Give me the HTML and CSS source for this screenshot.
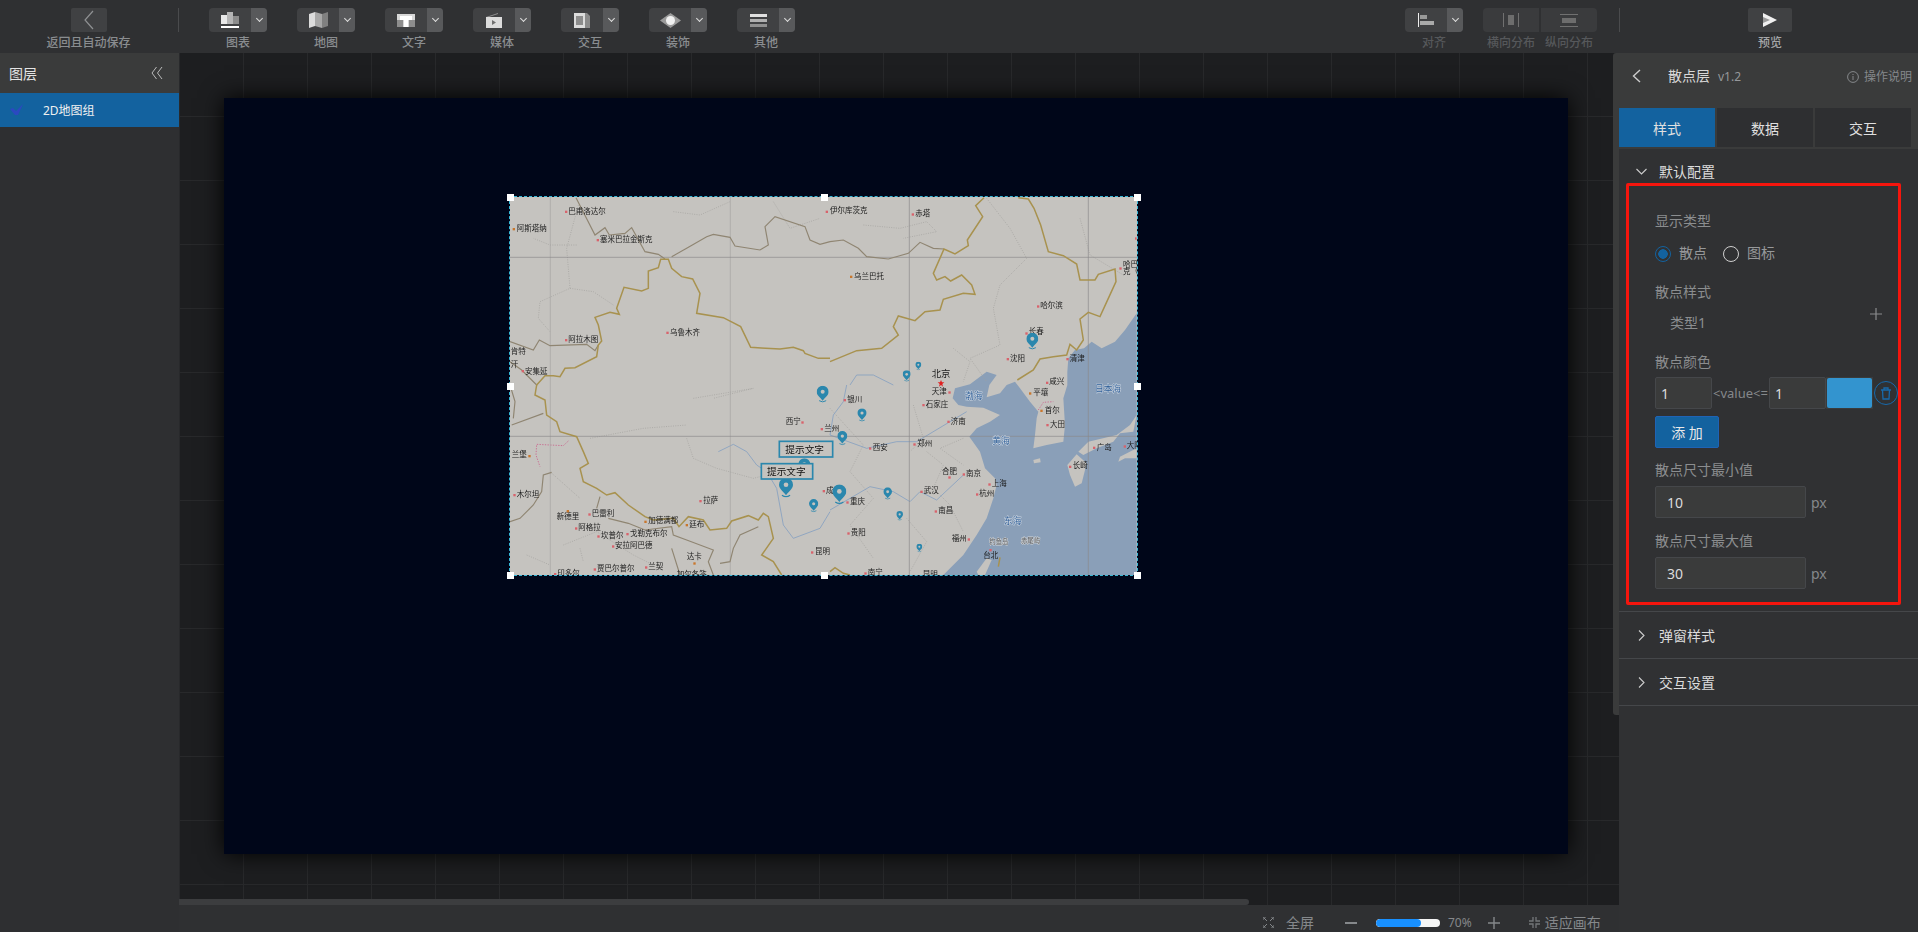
FILE: index.html
```html
<!DOCTYPE html>
<html>

<head>
    <title>散点层</title>
    <link rel="stylesheet" href="styles.css">
</head>

<body>
    <div class="toolbar">
        <div class="tool tool-back">
            <div class="tool-btn back-btn">
                <svg width="12" height="20" viewBox="0 0 12 20"><path d="M10 1 2 10l8 9" fill="none" stroke="#8e9092" stroke-width="1.2"/></svg>
            </div>
            <div class="tool-label">返回且自动保存</div>
        </div>
        <div class="tool-sep"></div>
        <div class="tool-group">
            <div class="tool">
                <div class="tool-btn">
                    <div class="tool-icon">
                        <svg width="18" height="16" viewBox="0 0 18 16"><rect x="0" y="3" width="6" height="9" fill="#e8e8e8"/><rect x="6" y="0" width="6" height="12" fill="#b5b5b5"/><rect x="12" y="4" width="6" height="8" fill="#8c8c8c"/><rect x="0" y="14" width="18" height="2" fill="#fff"/></svg>
                    </div>
                    <div class="tool-drop"><span class="drop-arrow"></span></div>
                </div>
                <div class="tool-label">图表</div>
            </div>
            <div class="tool">
                <div class="tool-btn">
                    <div class="tool-icon">
                        <svg width="19" height="16" viewBox="0 0 19 16"><path d="M0 2l6-2v14l-6 2z" fill="#dcdcdc"/><path d="M6 0l7 2v14l-7-2z" fill="#a8a8a8"/><path d="M13 2l6-2v14l-6 2z" fill="#808080"/></svg>
                    </div>
                    <div class="tool-drop"><span class="drop-arrow"></span></div>
                </div>
                <div class="tool-label">地图</div>
            </div>
            <div class="tool">
                <div class="tool-btn">
                    <div class="tool-icon">
                        <svg width="18" height="13" viewBox="0 0 18 13"><rect width="18" height="13" fill="#d8d8d8"/><path d="M3 2h12v4h-4v7H7V6H3z" fill="#fff"/><rect x="0" y="6" width="6" height="7" fill="#8d8d8d"/><rect x="12" y="6" width="6" height="7" fill="#8d8d8d"/></svg>
                    </div>
                    <div class="tool-drop"><span class="drop-arrow"></span></div>
                </div>
                <div class="tool-label">文字</div>
            </div>
            <div class="tool">
                <div class="tool-btn">
                    <div class="tool-icon">
                        <svg width="16" height="15" viewBox="0 0 16 15"><path d="M0 4 12 0v1L3 4z" fill="#8d8d8d"/><rect y="4" width="16" height="11" fill="#dcdcdc"/><path d="M6 7l4 2.5L6 12z" fill="#707070"/></svg>
                    </div>
                    <div class="tool-drop"><span class="drop-arrow"></span></div>
                </div>
                <div class="tool-label">媒体</div>
            </div>
            <div class="tool">
                <div class="tool-btn">
                    <div class="tool-icon">
                        <svg width="16" height="15" viewBox="0 0 16 15"><path d="M10 0h3l3 3v12h-6z" fill="#8a8a8a"/><rect width="11" height="15" fill="#dcdcdc"/><rect x="2" y="3" width="7" height="9" fill="#8c8c8c"/></svg>
                    </div>
                    <div class="tool-drop"><span class="drop-arrow"></span></div>
                </div>
                <div class="tool-label">交互</div>
            </div>
            <div class="tool">
                <div class="tool-btn">
                    <div class="tool-icon">
                        <svg width="21" height="15" viewBox="0 0 21 15"><path d="M10.500 0 21 7.500 10.500 15 0 7.500z" fill="#9a9a9a"/><circle cx="10.500" cy="7.500" r="4.500" fill="#f0f0f0"/></svg>
                    </div>
                    <div class="tool-drop"><span class="drop-arrow"></span></div>
                </div>
                <div class="tool-label">装饰</div>
            </div>
            <div class="tool">
                <div class="tool-btn">
                    <div class="tool-icon">
                        <svg width="17" height="13" viewBox="0 0 17 13"><rect width="17" height="3" fill="#e0e0e0"/><rect y="5" width="17" height="3" fill="#b0b0b0"/><rect y="10" width="17" height="3" fill="#909090"/></svg>
                    </div>
                    <div class="tool-drop"><span class="drop-arrow"></span></div>
                </div>
                <div class="tool-label">其他</div>
            </div>
        </div>
        <div class="tool tool-align">
            <div class="tool-btn">
                <div class="tool-icon">
                    <svg width="16" height="14" viewBox="0 0 16 14"><rect width="1" height="14" fill="#eee"/><rect x="2" y="2" width="7" height="4" fill="#999"/><rect x="2" y="8" width="14" height="4" fill="#aaa"/></svg>
                </div>
                <div class="tool-drop"><span class="drop-arrow"></span></div>
            </div>
            <div class="tool-label dim">对齐</div>
        </div>
        <div class="tool-pair">
            <div class="tool">
                <div class="tool-btn dist-btn">
                    <svg width="16" height="14" viewBox="0 0 16 14"><rect width="1" height="14" fill="#707070"/><rect x="15" width="1" height="14" fill="#707070"/><rect x="5" y="2" width="6" height="10" fill="#6d6d6d"/></svg>
                </div>
                <div class="tool-label dim">横向分布</div>
            </div>
            <div class="tool">
                <div class="tool-btn dist-btn">
                    <svg width="18" height="13" viewBox="0 0 18 13"><rect width="18" height="1" fill="#707070"/><rect y="12" width="18" height="1" fill="#707070"/><rect x="2" y="4" width="14" height="5" fill="#6d6d6d"/></svg>
                </div>
                <div class="tool-label dim">纵向分布</div>
            </div>
        </div>
        <div class="tool-sep sep-right"></div>
        <div class="tool tool-preview">
            <div class="tool-btn preview-btn">
                <svg width="14" height="14" viewBox="0 0 14 14"><path d="M0 0 14 7 0 14z" fill="#f0f0f0"/><path d="M0 4 7 7 0 10z" fill="#9a9a9a"/></svg>
            </div>
            <div class="tool-label bright">预览</div>
        </div>
    </div>

    <div class="main">
        <div class="sidebar">
            <div class="sidebar-head">
                <span>图层</span>
                <svg width="12" height="12" viewBox="0 0 12 12"><path d="M5.500 0 1 6l4.500 6M11 0 6.500 6l4.500 6" fill="none" stroke="#bbb" stroke-width="1"/></svg>
            </div>
            <div class="layer-row">
                <svg width="14" height="12" viewBox="0 0 14 12"><path d="M0 5l3-1 3 3 7-7-5 11H5z" fill="#2b49c0"/></svg>
                <span>2D地图组</span>
            </div>
        </div>

        <div class="center">
            <div class="canvas">
                <div class="artboard">
                    <div class="map-box">
                        <svg class="map" width="627" height="378" viewBox="30 36 1881 1134">
                            <defs>
                                <symbol id="pin" viewBox="0 0 24 34">
                                    <path d="M12 0A12 12 0 0 0 0 12c0 7 7 11 12 18 5-7 12-11 12-18A12 12 0 0 0 12 0z" fill="#2b87ad"/>
                                    <circle cx="12" cy="12" r="4" fill="#c5c3bf"/>
                                    <path d="M5 30q7 5 14 0" fill="none" stroke="#2b87ad" stroke-width="2"/>
                                </symbol>
                            </defs>
                            <rect x="30" y="36" width="1881" height="1134" fill="#c5c3bf"/>

                            <!-- 海 -->
                            <g transform="translate(990 0)">
                                <path class="sea" d="M920 385 885 435 855 470 815 490 785 470 762 490 735 495 715 520 712 560 712 600 700 640 705 720 700 770 650 780 610 790 615 750 620 700 625 680 600 650 570 610 555 590 530 600 510 625 470 637 478 600 500 570 470 560 420 598 375 610 368 640 385 660 410 665 460 668 510 690 480 710 440 730 418 755 450 800 465 850 495 880 500 900 490 940 470 1000 440 1050 400 1110 340 1170 920 1170z"/>
                                <path class="land" d="M920 690 910 740 870 745 850 770 800 790 760 810 745 800 775 770 860 750 900 720z"/>
                                <path class="land" d="M920 790 870 815 865 830 885 820 920 820z"/>
                                <path class="land" d="M712 840 740 808 770 835 755 895 735 905 720 870z"/>
                                <path class="land" d="M610 825 630 820 632 832 612 835z"/>
                                <path class="land" d="M440 1160 470 1120 485 1125 465 1170 445 1170z"/>
                            </g>

                            <!-- 省界 -->
                            <g class="dots">
                                <path d="M235 60 200 190 210 310 120 350 115 400 150 440M230 180 150 180 100 160M210 310 280 320 340 360"/>
                                <path d="M520 80 600 90 690 50M820 50 870 130 960 100"/>
                                <g transform="translate(990 0)">
                                    <path d="M100 120 210 130 290 110 320 140 220 160M470 40 540 130 590 220 510 300 490 370 510 480 420 520 470 590M750 100 780 210 880 270M370 490 420 530 400 590"/>
                                </g>
                                <g transform="translate(0 600)">
                                    <path d="M580 40 760 10 640 40M560 160 580 220 650 250 760 280 800 270M270 160 430 130 560 120M150 260 240 340M190 480 290 440 400 510 460 540M80 510 150 540M240 490 250 530"/>
                                </g>
                                <g transform="translate(990 600)">
                                    <path d="M0 70 100 180 60 260 130 340 60 420 130 520M290 200 340 240 310 310 360 360 400 440M400 160 330 190 400 240M250 60 280 160 240 200M230 400 290 470 240 560"/>
                                </g>
                            </g>
                            <path class="dash-red" transform="translate(0 600)" d="M205 168 190 182 110 178 108 210 120 245"/>
                            <path class="dash-red" transform="translate(990 600)" d="M625 75 640 52 670 50"/>

                            <!-- 河流 -->
                            <g class="river">
                                <path transform="translate(0 600)" d="M655 200 700 178 740 200 770 240 800 260 830 310 850 420 880 460 960 430 990 380"/>
                                <path transform="translate(990 600)" d="M0 375 60 340 120 305 190 320 240 350 270 320 320 345 400 270M50 0 40 50 10 90 0 150 110 190 200 170 260 170 410 80"/>
                                <path transform="translate(990 0)" d="M60 600 80 570 130 570 190 600"/>
                            </g>

                            <!-- 经纬线 -->
                            <path class="graticule" d="M151 36V1170M691 36V1170"/>
                            <path class="graticule dark" d="M1228 36V1170M1765 36V1170M30 217H1911M30 754H1911"/>

                            <!-- 国界 -->
                            <g class="border-gray">
                                <path d="M228 38 285 150 315 128 328 150 375 145 395 128 435 200 475 208 495 222M515 215 560 190 620 155 640 148 690 157 705 183 780 195 805 180 795 125 825 95 915 125 930 165 960 178 990 170"/>
                                <path d="M30 470 100 495 118 465 150 482 260 478 285 497 295 480M30 530 65 555 110 600"/>
                                <g transform="translate(990 0)">
                                    <path d="M0 170 40 165 85 190 110 215 175 222 235 205 270 172 310 190 342 192"/>
                                </g>
                                <g transform="translate(0 600)">
                                    <path d="M30 0 45 50 40 100M35 120 130 85M30 410 60 400 100 360 125 320 130 270 155 262M290 370 300 335M325 400 385 415 435 435 515 425 520 450 560 465 640 495 625 530 640 570M660 535 690 530 700 490 720 450 775 425M515 490 540 570"/>
                                </g>
                            </g>
                            <g class="border-gold">
                                <path d="M110 600 135 572 160 572 180 575 195 550 225 548 290 515 295 480 305 468 295 420 285 397 330 382 358 388 350 370 372 307 425 318 445 310 445 258 475 248 482 223 505 223 515 250 545 275 578 282 600 325 590 385 670 398 722 425 752 487 840 492 880 487 910 497 915 505 955 520 990 520"/>
                                <g transform="translate(990 0)">
                                    <path d="M0 530 80 497 155 490 205 450 190 425 205 393 255 407 285 380 330 375 340 343 400 325 435 328 425 300 395 270 362 288 345 275 320 285 310 265 342 192 375 207 415 182 412 165 458 95 437 62 462 38"/>
                                    <path d="M565 38 595 42 612 70 632 120 655 200 700 212 740 237 750 285 795 285 805 268 855 252 858 290 835 340 810 395 775 382 750 402 760 465 740 495 720 478 710 510 670 515 630 522 610 555 562 585"/>
                                </g>
                                <g transform="translate(0 600)">
                                    <path d="M110 0 105 30 135 45 140 90 170 110 180 140 230 155 250 200 265 235 240 250 250 290 290 310 320 330 345 323 385 360 435 395 460 405 520 400 537 425 565 395 610 405 630 435 680 430 695 408 745 392 775 405 790 385 805 395 820 460 785 510 820 530 845 570"/>
                                </g>
                                <path transform="translate(990 600)" d="M0 560 15 548 40 565 60 570M510 517 505 545"/>
                            </g>

                            <!-- 城市 -->
                            <g class="city">
                                <rect x="195" y="77" width="7" height="7"/><text x="205" y="87">巴甫洛达尔</text>
                                <rect class="cap" x="38" y="129" width="7" height="7"/><text x="50" y="139">阿斯塔纳</text>
                                <rect x="290" y="162" width="7" height="7"/><text x="300" y="171">塞米巴拉金斯克</text>
                                <rect x="195" y="462" width="7" height="7"/><text x="205" y="471">阿拉木图</text>
                                <text x="32" y="506">肯特</text>
                                <text x="32" y="545">汗</text>
                                <rect x="65" y="555" width="7" height="7"/><text x="75" y="566">安集延</text>
                                <rect x="499" y="440" width="7" height="7"/><text x="510" y="450">乌鲁木齐</text>
                                <rect x="977" y="77" width="7" height="7"/>
                            </g>
                            <g class="city" transform="translate(990 0)">
                                <text x="0" y="85">伊尔库茨克</text>
                                <rect x="245" y="85" width="7" height="7"/><text x="256" y="94">赤塔</text>
                                <rect class="cap" x="60" y="272" width="7" height="7"/><text x="72" y="281">乌兰巴托</text>
                                <rect x="621" y="361" width="7" height="7"/><text x="631" y="370">哈尔滨</text>
                                <rect x="586" y="442" width="7" height="7"/><text x="596" y="448">长春</text>
                                <rect x="530" y="519" width="7" height="7"/><text x="540" y="528">沈阳</text>
                                <rect x="709" y="519" width="7" height="7"/><text x="719" y="527">清津</text>
                                <rect x="648" y="590" width="7" height="7"/><text x="658" y="598">咸兴</text>
                                <rect x="868" y="247" width="7" height="7"/><text x="879" y="245">哈巴</text><text x="879" y="268">克（</text>
                                <rect x="915" y="157" width="5" height="7"/>
                                <text class="capital" x="305" y="575">北京</text>
                                <path class="star" d="M333 585l3 7h7l-6 5 2 8-6-5-6 5 2-8-6-5h7z"/>
                            </g>
                            <g class="city" transform="translate(0 600)">
                                <text x="35" y="217">兰堡</text><rect class="cap" x="85" y="210" width="7" height="7"/>
                                <rect x="40" y="327" width="7" height="7"/><text x="50" y="337">木尔坦</text>
                                <text x="170" y="402">新德里</text><rect class="cap" x="200" y="375" width="7" height="7"/>
                                <rect x="265" y="385" width="7" height="7"/><text x="275" y="393">巴雷利</text>
                                <rect x="225" y="427" width="7" height="7"/><text x="235" y="435">阿格拉</text>
                                <rect x="292" y="451" width="7" height="7"/><text x="303" y="460">坎普尔</text>
                                <rect x="379" y="444" width="7" height="7"/><text x="390" y="452">戈勒克布尔</text>
                                <rect x="336" y="481" width="7" height="7"/><text x="345" y="490">安拉阿巴德</text>
                                <rect class="cap" x="433" y="407" width="7" height="7"/><text x="445" y="415">加德满都</text>
                                <rect class="cap" x="557" y="417" width="7" height="7"/><text x="568" y="425">廷布</text>
                                <rect x="598" y="345" width="7" height="7"/><text x="610" y="353">拉萨</text>
                                <text x="560" y="522">达卡</text><rect class="cap" x="580" y="532" width="7" height="7"/>
                                <rect x="281" y="550" width="7" height="7"/><text x="291" y="559">贾巴尔普尔</text>
                                <rect x="435" y="544" width="7" height="7"/><text x="445" y="552">兰契</text>
                                <rect x="162" y="564" width="7" height="7"/><text x="172" y="572">印多尔</text>
                                <text x="530" y="576">加尔各答</text>
                                <text x="857" y="118">西宁</text><rect x="904" y="109" width="7" height="7"/>
                                <rect x="962" y="129" width="7" height="7"/><text x="973" y="138">兰州</text>
                                <rect x="968" y="315" width="7" height="7"/><text x="978" y="325">成都</text>
                                <rect x="933" y="499" width="7" height="7"/><text x="945" y="507">昆明</text>
                            </g>
                            <g class="city" transform="translate(990 600)">
                                <text x="305" y="28">天津</text><rect x="355" y="19" width="7" height="7"/>
                                <rect x="41" y="42" width="7" height="7"/><text x="52" y="51">银川</text>
                                <rect x="277" y="57" width="7" height="7"/><text x="287" y="66">石家庄</text>
                                <rect x="352" y="107" width="7" height="7"/><text x="362" y="117">济南</text>
                                <rect class="cap" x="597" y="22" width="7" height="7"/><text x="610" y="30">平壤</text>
                                <rect class="cap" x="631" y="74" width="7" height="7"/><text x="644" y="83">首尔</text>
                                <rect x="649" y="117" width="7" height="7"/><text x="660" y="127">大田</text>
                                <rect x="789" y="185" width="7" height="7"/><text x="800" y="194">广岛</text>
                                <rect x="881" y="181" width="7" height="7"/><text x="890" y="190">大阪</text>
                                <rect x="717" y="242" width="7" height="7"/><text x="728" y="250">长崎</text>
                                <rect x="117" y="187" width="7" height="7"/><text x="128" y="196">西安</text>
                                <rect x="250" y="175" width="7" height="7"/><text x="262" y="184">郑州</text>
                                <text x="336" y="266">合肥</text><rect x="355" y="274" width="7" height="7"/>
                                <rect x="398" y="265" width="7" height="7"/><text x="408" y="273">南京</text>
                                <rect x="475" y="295" width="7" height="7"/><text x="485" y="303">上海</text>
                                <rect x="438" y="325" width="7" height="7"/><text x="448" y="334">杭州</text>
                                <rect x="271" y="317" width="7" height="7"/><text x="281" y="325">武汉</text>
                                <rect x="49" y="349" width="7" height="7"/><text x="60" y="358">重庆</text>
                                <rect x="314" y="376" width="7" height="7"/><text x="325" y="385">南昌</text>
                                <rect x="52" y="442" width="7" height="7"/><text x="62" y="450">贵阳</text>
                                <text x="365" y="469">福州</text><rect x="413" y="460" width="7" height="7"/>
                                <text x="460" y="518">台北</text><rect x="478" y="492" width="7" height="7"/>
                                <rect x="103" y="562" width="7" height="7"/><text x="113" y="569">南宁</text>
                                <text x="278" y="576">昆明</text>
                                <text class="islet" x="478" y="478">钓鱼岛</text>
                                <text class="islet" x="573" y="475">赤尾屿</text>
                                <text class="water" x="405" y="43">渤海</text>
                                <text class="water" x="487" y="178">黄海</text>
                                <text class="water" x="522" y="416">东海</text>
                                <text class="water" x="795" y="20">日本海</text>
                            </g>

                            <!-- 散点 -->
                            <use href="#pin" x="1579" y="443" width="36" height="51"/>
                            <use href="#pin" x="1246" y="530" width="18" height="26"/>
                            <use href="#pin" x="1208" y="556" width="24" height="34"/>
                            <use href="#pin" x="1072" y="670" width="28" height="40"/>
                            <use href="#pin" x="1012" y="738" width="30" height="43"/>
                            <use href="#pin" x="997" y="898" width="42" height="60"/>
                            <use href="#pin" x="1150" y="907" width="26" height="37"/>
                            <use href="#pin" x="1189" y="978" width="20" height="29"/>
                            <use href="#pin" x="1249" y="1076" width="18" height="26"/>
                            <use href="#pin" x="950" y="602" width="36" height="51"/>
                            <use href="#pin" x="895" y="820" width="36" height="51"/>
                            <use href="#pin" x="837" y="878" width="42" height="60"/>
                            <use href="#pin" x="927" y="942" width="28" height="40"/>
                            <rect class="tip-box" x="838" y="769" width="160" height="47"/>
                            <text class="tip-text" x="856" y="803">提示文字</text>
                            <rect class="tip-box" x="784" y="836" width="154" height="46"/>
                            <text class="tip-text" x="801" y="870">提示文字</text>
                        </svg>
                        <span class="handle h-tl"></span>
                        <span class="handle h-tc"></span>
                        <span class="handle h-tr"></span>
                        <span class="handle h-ml"></span>
                        <span class="handle h-mr"></span>
                        <span class="handle h-bl"></span>
                        <span class="handle h-bc"></span>
                        <span class="handle h-br"></span>
                    </div>
                </div>
                <div class="h-scroll"></div>
            </div>
            <div class="statusbar">
                <svg class="st-full" width="11" height="11" viewBox="0 0 11 11"><path d="M0 3V0h3M8 0h3v3M11 8v3H8M3 11H0V8M1 1l3 3M10 1 7 4M10 10 7 7M1 10l3-3" fill="none" stroke="#85888b"/></svg>
                <span class="st-text st-full-text">全屏</span>
                <span class="st-minus"></span>
                <div class="zoom-track"><div class="zoom-fill"></div></div>
                <span class="st-pct">70%</span>
                <svg class="st-plus" width="12" height="12" viewBox="0 0 12 12"><path d="M6 0v12M0 6h12" stroke="#85888b" stroke-width="1.400"/></svg>
                <svg class="st-fit" width="11" height="11" viewBox="0 0 11 11"><path d="M4 0v4H0M7 0v4h4M4 11V7H0M7 11V7h4" fill="none" stroke="#74777a" stroke-width="1.300"/></svg>
                <span class="st-text">适应画布</span>
            </div>
        </div>

        <div class="panel">
            <div class="v-scroll"></div>
            <div class="panel-head">
                <svg class="panel-back" width="9" height="14" viewBox="0 0 9 14"><path d="M8 1 1.500 7 8 13" fill="none" stroke="#ccc" stroke-width="1.400"/></svg>
                <span class="panel-title">散点层</span>
                <span class="panel-version">v1.2</span>
                <svg class="panel-info" width="12" height="12" viewBox="0 0 12 12"><circle cx="6" cy="6" r="5.400" fill="none" stroke="#85888b"/><path d="M6 5v4M6 3v1" stroke="#85888b"/></svg>
                <span class="panel-help">操作说明</span>
            </div>
            <div class="tabs">
                <div class="tab active">样式</div>
                <div class="tab">数据</div>
                <div class="tab">交互</div>
            </div>

            <div class="section-head first">
                <svg width="11" height="7" viewBox="0 0 11 7"><path d="M.5 1l5 5 5-5" fill="none" stroke="#ccc" stroke-width="1.100"/></svg>
                <span>默认配置</span>
            </div>
            <div class="config">
                <div class="red-box"></div>
                <div class="field-label">显示类型</div>
                <div class="radio-row">
                    <span class="radio checked"></span>
                    <span class="radio-text">散点</span>
                    <span class="radio"></span>
                    <span class="radio-text">图标</span>
                </div>
                <div class="field-label">散点样式</div>
                <div class="type-row">
                    <span>类型1</span>
                    <svg width="12" height="12" viewBox="0 0 12 12"><path d="M6 0v12M0 6h12" stroke="#8a8c8e" stroke-width="1.200"/></svg>
                </div>
                <div class="field-label color-label">散点颜色</div>
                <div class="color-row">
                    <div class="input small">1</div>
                    <span class="range-text">&lt;value&lt;=</span>
                    <div class="input small">1</div>
                    <div class="swatch"><span></span></div>
                    <div class="del-btn">
                        <svg width="12" height="13" viewBox="0 0 12 13"><path d="M1 3h10M4 3V1h4v2M2.500 3l.5 9h6l.5-9" fill="none" stroke="#1769ab" stroke-width="1.300"/></svg>
                    </div>
                </div>
                <div class="add-btn">添 加</div>
                <div class="field-label min-label">散点尺寸最小值</div>
                <div class="num-row">
                    <div class="input wide">10</div>
                    <span>px</span>
                </div>
                <div class="field-label max-label">散点尺寸最大值</div>
                <div class="num-row">
                    <div class="input wide">30</div>
                    <span>px</span>
                </div>
            </div>
            <div class="section-head">
                <svg width="7" height="11" viewBox="0 0 7 11"><path d="M1 .5l5 5-5 5" fill="none" stroke="#ccc" stroke-width="1.100"/></svg>
                <span>弹窗样式</span>
            </div>
            <div class="section-head">
                <svg width="7" height="11" viewBox="0 0 7 11"><path d="M1 .5l5 5-5 5" fill="none" stroke="#ccc" stroke-width="1.100"/></svg>
                <span>交互设置</span>
            </div>
        </div>
    </div>
</body>

</html>
```

FILE: styles.css
```css
* {
    box-sizing: border-box;
}

html,
body {
    height: 100%;
}

body {
    margin: 0;
    display: flex;
    flex-direction: column;
    overflow: hidden;
    background: #2f3032;
    color: #8b8d8f;
    font-family: "Noto Sans", "Noto Sans CJK SC", sans-serif;
    font-size: 14px;
}

/* toolbar */
.toolbar {
    height: 53px;
    flex: none;
    display: flex;
    padding: 8px 0 0 46px;
    background: #2f3032;
}

.tool {
    display: flex;
    flex-direction: column;
    align-items: center;
}

.tool-back {
    width: 85px;
}

.tool-btn {
    height: 24px;
    width: 58px;
    display: flex;
    align-items: center;
    justify-content: center;
    background: #404143;
    border-radius: 4px;
    overflow: hidden;
}

.back-btn {
    width: 36px;
    border-radius: 2px;
}

.dist-btn {
    width: 56px;
    border-radius: 0;
    background: #3a3b3d;
}

.preview-btn {
    width: 44px;
    border-radius: 2px;
}

.tool-icon {
    flex: 1;
    display: flex;
    align-items: center;
    justify-content: center;
}

.tool-drop {
    width: 16px;
    height: 100%;
    display: flex;
    align-items: center;
    justify-content: center;
    background: #58595b;
}

.drop-arrow {
    width: 5px;
    height: 5px;
    margin-top: -3px;
    border-right: 1px solid #ddd;
    border-bottom: 1px solid #ddd;
    transform: rotate(45deg);
}

.tool-label {
    margin-top: 4px;
    font-size: 12px;
    font-weight: 500;
    line-height: 14px;
    white-space: nowrap;
    color: #8a8d90;
}

.tool-label.dim {
    color: #56585b;
}

.tool-label.bright {
    color: #a4a6a8;
}

.tool-sep {
    width: 1px;
    height: 24px;
    margin-left: 47px;
    background: #4a4b4d;
}

.sep-right {
    margin-left: 22px;
}

.tool-group {
    display: flex;
    gap: 30px;
    margin-left: 30px;
}

.tool-align {
    margin-left: 610px;
}

.tool-pair {
    display: flex;
    gap: 2px;
    margin-left: 20px;
}

.tool-pair .tool:first-child .tool-btn {
    border-radius: 4px 0 0 4px;
}

.tool-pair .tool:last-child .tool-btn {
    border-radius: 0 4px 4px 0;
}

.tool-preview {
    margin-left: 128px;
}

/* main */
.main {
    flex: 1;
    min-height: 0;
    display: flex;
}

.sidebar {
    width: 179px;
    flex: none;
    background: #2e2f31;
}

.sidebar-head {
    height: 40px;
    display: flex;
    align-items: center;
    justify-content: space-between;
    padding: 0 16px 0 9px;
    background: #3a3b3b;
    color: #e4e4e4;
}

.layer-row {
    height: 34px;
    display: flex;
    align-items: center;
    padding-left: 10px;
    background: #13629f;
    color: #f0f0f0;
    font-size: 12px;
}

.layer-row span {
    margin-left: 19px;
}

.center {
    flex: 1;
    min-width: 0;
    display: flex;
    flex-direction: column;
}

.canvas {
    position: relative;
    flex: 1;
    min-height: 0;
    padding: 45px;
    overflow: hidden;
    background-color: #1d1e20;
    background-image: linear-gradient(to right, #28292b 1px, transparent 1px), linear-gradient(to bottom, #28292b 1px, transparent 1px);
    background-size: 64px 64px;
    background-position: 0 -1px;
}

.artboard {
    position: relative;
    width: 1344px;
    height: 756px;
    background: #000619;
    box-shadow: 0 0 22px #000;
}

.map-box {
    position: absolute;
    left: 286px;
    top: 99px;
    width: 627px;
    height: 378px;
    outline: 1px dashed #35b8d8;
}

.map {
    display: block;
    font-family: "Noto Sans CJK SC", sans-serif;
    filter: blur(0.3px);
}

.sea {
    fill: #8a9fb8;
}

.land {
    fill: #c5c3bf;
}

.dots path {
    fill: none;
    stroke: #a09f9b;
    stroke-width: 2;
    stroke-dasharray: 3 4;
}

.dash-red {
    fill: none;
    stroke: #c9608a;
    stroke-width: 2.500;
    stroke-dasharray: 4 4;
}

.river path {
    fill: none;
    stroke: #86a0c0;
    stroke-width: 2.500;
}

.graticule {
    fill: none;
    stroke: #a6a5a3;
    stroke-width: 2;
}

.graticule.dark {
    stroke: #8b8a8b;
}

.border-gray path {
    fill: none;
    stroke: #8f8572;
    stroke-width: 3.500;
}

.border-gold path {
    fill: none;
    stroke: #a8924f;
    stroke-width: 4.500;
}

.city rect {
    fill: #d8636c;
}

.city rect.cap {
    fill: #c9772c;
}

.city text {
    fill: #1c1c1c;
    font-size: 22.500px;
}

.city text.capital {
    font-size: 28px;
}

.star {
    fill: #e02020;
}

.city text.water {
    fill: #2f5f98;
    font-size: 26px;
    stroke: #c9d3df;
    stroke-width: 3;
    paint-order: stroke;
}

.city text.islet {
    fill: #55595e;
    font-size: 19px;
    stroke: #d0d2d4;
    stroke-width: 3;
    paint-order: stroke;
}

.tip-box {
    fill: #c5c3bf;
    stroke: #2b87ad;
    stroke-width: 5;
}

.tip-text {
    fill: #111;
    font-size: 29px;
}

.handle {
    position: absolute;
    width: 7px;
    height: 7px;
    margin: -3px 0 0 -3px;
    background: #fff;
}

.h-tl { left: 0; top: 0; }
.h-tc { left: 50%; top: 0; }
.h-tr { left: 100%; top: 0; }
.h-ml { left: 0; top: 50%; }
.h-mr { left: 100%; top: 50%; }
.h-bl { left: 0; top: 100%; }
.h-bc { left: 50%; top: 100%; }
.h-br { left: 100%; top: 100%; }

.h-scroll {
    position: absolute;
    left: 0;
    bottom: 0;
    width: 1070px;
    height: 6px;
    background: #3c3d3f;
    border-radius: 0 3px 3px 0;
}

/* status bar */
.statusbar {
    height: 27px;
    flex: none;
    display: flex;
    align-items: center;
    padding: 8px 0 0 1084px;
    background: #2f3032;
}

.st-text {
    font-size: 14px;
    line-height: 19px;
    color: #85888b;
}

.st-full-text {
    margin-left: 12px;
}

.st-minus {
    width: 12px;
    height: 2px;
    margin-left: 31px;
    background: #85888b;
}

.zoom-track {
    width: 64px;
    height: 8px;
    margin-left: 19px;
    border-radius: 4px;
    overflow: hidden;
    background: #f5f5f5;
}

.zoom-fill {
    width: 45px;
    height: 100%;
    border-radius: 4px;
    background: #1890ff;
}

.st-pct {
    margin-left: 8px;
    font-size: 12px;
    color: #85888b;
}

.st-plus {
    margin-left: 16px;
}

.st-fit {
    margin: 0 5px 0 29px;
}

/* right panel */
.panel {
    position: relative;
    width: 299px;
    flex: none;
    background: #303133;
}

.v-scroll {
    position: absolute;
    left: -6px;
    top: 0;
    width: 6px;
    height: 662px;
    background: #3a3b3b;
    border-radius: 3px 0 0 3px;
}

.panel-head {
    height: 55px;
    display: flex;
    align-items: flex-start;
    padding: 16px 0 0 13px;
    background: #3a3b3b;
}

.panel-back {
    margin-top: 0;
}

.panel-title {
    margin-left: 27px;
    line-height: 14px;
    color: #d8d8d8;
}

.panel-version {
    margin-left: 8px;
    font-size: 12px;
    line-height: 16px;
    color: #96989a;
}

.panel-info {
    margin: 2px 0 0 auto;
}

.panel-help {
    margin: 0 6px 0 5px;
    font-size: 12px;
    line-height: 16px;
    color: #85888b;
}

.tabs {
    height: 41px;
    display: flex;
    gap: 2px;
    padding: 0 7px 2px 0;
    background: #3a3b3b;
}

.tab {
    flex: 1;
    display: flex;
    align-items: center;
    justify-content: center;
    background: #2e2f31;
    color: #e0e0e0;
}

.tab.active {
    background: #13629f;
}

.section-head {
    height: 47px;
    display: flex;
    align-items: center;
    padding-left: 19px;
    border-bottom: 1px solid #45474a;
    color: #dcdcdc;
}

.section-head span {
    margin-left: 14px;
}

.section-head.first {
    height: 46px;
    padding: 0 0 2px 17px;
    border-bottom: none;
}

.section-head.first span {
    margin-left: 12px;
}

.config {
    position: relative;
    height: 417px;
    padding: 16px 0 0 36px;
    border-bottom: 1px solid #45474a;
}

.red-box {
    position: absolute;
    left: 7px;
    top: -12px;
    width: 275px;
    height: 422px;
    border: 3px solid #f5150d;
    border-radius: 2px;
}

.field-label {
    height: 20px;
    margin-top: 18px;
    line-height: 20px;
    color: #8b8d8f;
}

.field-label:nth-child(2) {
    margin-top: 0;
}

.radio-row {
    display: flex;
    align-items: center;
    height: 20px;
    margin-top: 13px;
}

.radio {
    width: 16px;
    height: 16px;
    border: 1px solid #cfcfcf;
    border-radius: 50%;
}

.radio.checked {
    border-color: #13629f;
    background: radial-gradient(circle, #13629f 0, #13629f 4.500px, transparent 5px);
}

.radio-text {
    margin: 0 16px 0 8px;
    color: #96989a;
    line-height: 18px;
    align-self: flex-start;
}

.type-row {
    display: flex;
    justify-content: space-between;
    width: 227px;
    height: 20px;
    margin-top: 11px;
    padding-left: 15px;
    line-height: 20px;
}

.type-row svg {
    margin-top: -5px;
}

.field-label.color-label {
    margin-top: 19px;
}

.color-row {
    display: flex;
    align-items: center;
    height: 32px;
    margin-top: 5px;
}

.input {
    height: 32px;
    display: flex;
    align-items: center;
    background: #3a3b3b;
    border: 1px solid #45474a;
    border-radius: 2px;
    color: #dcdcdc;
}

.input.small {
    width: 57px;
    padding-left: 5px;
}

.input.wide {
    width: 151px;
    padding-left: 11px;
}

.range-text {
    width: 57px;
    text-align: center;
    font-size: 13px;
    white-space: nowrap;
    color: #85888b;
}

.swatch {
    width: 47px;
    height: 32px;
    padding: 1px;
    background: #3a3b3b;
}

.swatch span {
    display: block;
    height: 100%;
    border-radius: 2px;
    background: #3394cf;
}

.del-btn {
    width: 24px;
    height: 24px;
    margin-left: 1px;
    display: flex;
    align-items: center;
    justify-content: center;
    border: 1px solid #1769ab;
    border-radius: 50%;
}

.add-btn {
    width: 64px;
    height: 32px;
    margin-top: 7px;
    display: flex;
    align-items: center;
    justify-content: center;
    background: #13629f;
    border: 1px solid #1f63b5;
    border-radius: 2px;
    color: #e8e8e8;
    white-space: pre;
}

.field-label.min-label {
    margin-top: 12px;
}

.field-label.max-label {
    margin-top: 13px;
}

.num-row {
    display: flex;
    align-items: center;
    gap: 5px;
    margin-top: 6px;
    color: #85888b;
}
```
